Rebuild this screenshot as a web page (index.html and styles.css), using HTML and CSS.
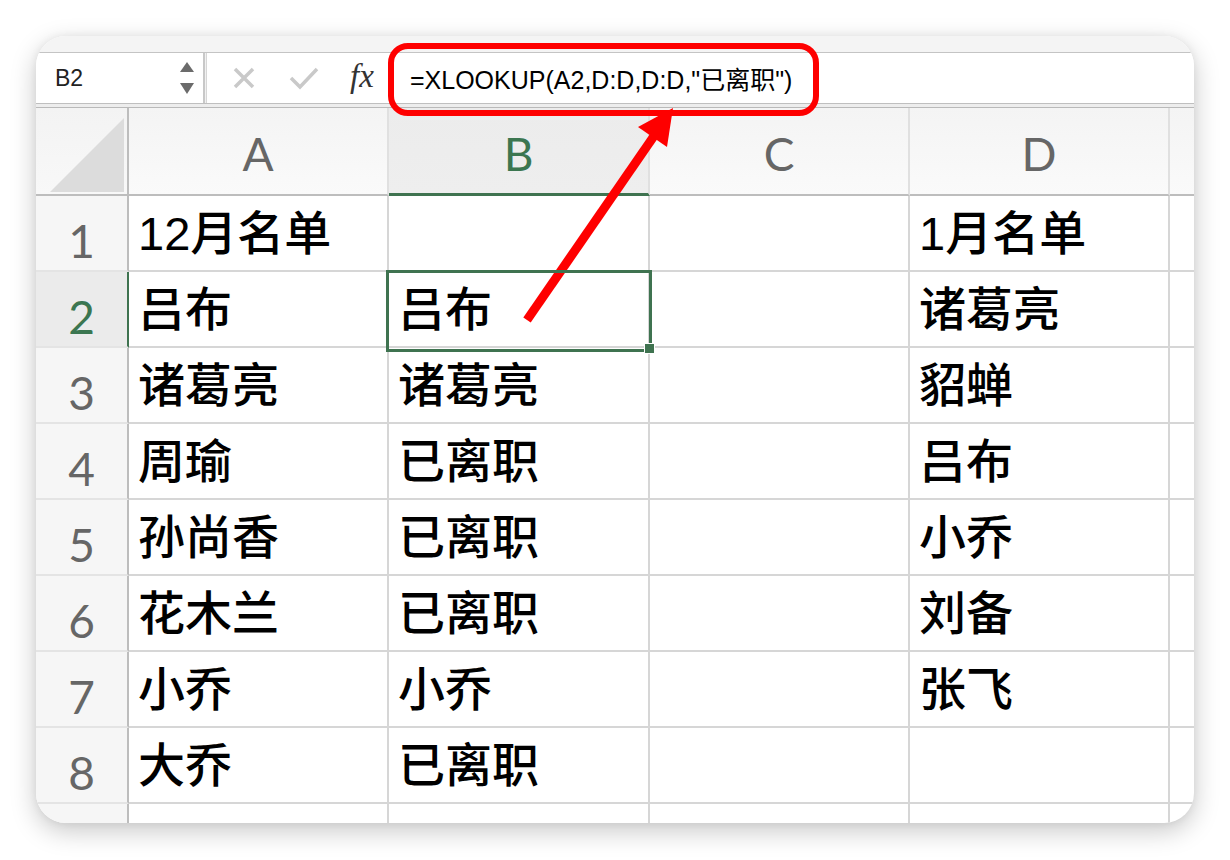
FILE: index.html
```html
<!DOCTYPE html>
<html lang="zh-CN">
<head>
<meta charset="utf-8">
<title>XLOOKUP</title>
<link rel="stylesheet" href="styles.css">
</head>
<body>
<div class="stage">
  <div class="card">
    <div class="topband"></div>
    <div class="fbar">
      <div class="namebox">
        <span class="ref">B2</span>
        <svg class="spin" width="14" height="32" viewBox="0 0 14 32"><polygon points="0,10 7,0 14,10" fill="#6b6b6b"/><polygon points="0,21 14,21 7,32" fill="#6b6b6b"/></svg>
      </div>
      <div class="vsep"></div>
      <div class="tools">
        <svg class="ico-x" width="24" height="24" viewBox="0 0 24 24"><path d="M3 3 L21 21 M21 3 L3 21" stroke="#c9c9c9" stroke-width="3.5" fill="none"/></svg>
        <svg class="ico-ok" width="30" height="24" viewBox="0 0 30 24"><path d="M2 12 L11 21 L28 3" stroke="#c9c9c9" stroke-width="3.5" fill="none"/></svg>
        <span class="fx">fx</span>
      </div>
      <div class="formula">=XLOOKUP(A2,D:D,D:D,"已离职")</div>
    </div>
    <div class="fsep"></div>
    <div class="sheet">
      <div class="corner"><svg width="91" height="86" viewBox="0 0 91 86"><polygon points="14,84 88,84 88,10" fill="#dcdcdc"/></svg></div>
      <div class="h">A</div>
      <div class="h active">B</div>
      <div class="h">C</div>
      <div class="h">D</div>
      <div class="h last"></div>

      <div class="r">1</div><div class="c">12月名单</div><div class="c"></div><div class="c"></div><div class="c">1月名单</div><div class="c last"></div>
      <div class="r active">2</div><div class="c">吕布</div><div class="c sel">吕布<span class="handle"></span></div><div class="c"></div><div class="c">诸葛亮</div><div class="c last"></div>
      <div class="r">3</div><div class="c">诸葛亮</div><div class="c">诸葛亮</div><div class="c"></div><div class="c">貂蝉</div><div class="c last"></div>
      <div class="r">4</div><div class="c">周瑜</div><div class="c">已离职</div><div class="c"></div><div class="c">吕布</div><div class="c last"></div>
      <div class="r">5</div><div class="c">孙尚香</div><div class="c">已离职</div><div class="c"></div><div class="c">小乔</div><div class="c last"></div>
      <div class="r">6</div><div class="c">花木兰</div><div class="c">已离职</div><div class="c"></div><div class="c">刘备</div><div class="c last"></div>
      <div class="r">7</div><div class="c">小乔</div><div class="c">小乔</div><div class="c"></div><div class="c">张飞</div><div class="c last"></div>
      <div class="r">8</div><div class="c">大乔</div><div class="c">已离职</div><div class="c"></div><div class="c"></div><div class="c last"></div>
      <div class="r"></div><div class="c"></div><div class="c"></div><div class="c"></div><div class="c"></div><div class="c last"></div>
    </div>
  </div>
  <div class="callout"></div>
  <svg class="arrow" width="1230" height="860" viewBox="0 0 1230 860">
    <line x1="527" y1="320" x2="654" y2="136" stroke="#fe0000" stroke-width="9"/>
    <polygon points="673,108 638,127 667,147" fill="#fe0000"/>
  </svg>
</div>
</body>
</html>
```

FILE: styles.css
```css
html, body {
  margin: 0;
  padding: 0;
  background: #ffffff;
}

.stage {
  position: relative;
  width: 1230px;
  height: 860px;
  padding: 36px;
  box-sizing: border-box;
  font-family: "Liberation Sans", "Noto Sans CJK SC", sans-serif;
}

.card {
  width: 1158px;
  height: 787px;
  border-radius: 30px;
  overflow: hidden;
  background: #ffffff;
  box-shadow: 0 8px 26px rgba(0, 0, 0, 0.22), 0 0 8px rgba(0, 0, 0, 0.06);
  display: flex;
  flex-direction: column;
}

.topband {
  height: 16px;
  flex: none;
  background: #f4f4f4;
}

.fbar {
  height: 52px;
  flex: none;
  box-sizing: border-box;
  border-top: 1px solid #c4c4c4;
  border-bottom: 1px solid #bfbfbf;
  display: flex;
  align-items: stretch;
  background: #ffffff;
}

.namebox {
  width: 167px;
  flex: none;
  box-sizing: border-box;
  padding: 0 9px 0 19px;
  display: flex;
  align-items: center;
  justify-content: space-between;
}

.ref {
  font-size: 23px;
  color: #222222;
}

.spin {
  display: block;
}

.vsep {
  width: 4px;
  flex: none;
  box-sizing: border-box;
  border-left: 2px solid #c8c8c8;
  border-right: 1px solid #d6d6d6;
  background: #f1f1f1;
}

.tools {
  width: 196px;
  flex: none;
  display: flex;
  align-items: center;
}

.ico-x {
  margin-left: 25px;
  display: block;
}

.ico-ok {
  margin-left: 33px;
  display: block;
}

.fx {
  margin-left: 31px;
  font-family: "Liberation Serif", "DejaVu Serif", serif;
  font-style: italic;
  font-size: 33px;
  color: #333333;
  line-height: 1;
  margin-top: -4px;
}

.formula {
  display: flex;
  align-items: center;
  padding-left: 7px;
  font-size: 25px;
  color: #000000;
  white-space: nowrap;
}

.fsep {
  height: 3px;
  flex: none;
  background: #ededed;
  border-bottom: 1px solid #b9b9b9;
}

.sheet {
  flex: 1;
  display: grid;
  grid-template-columns: 93px 260px 261px 260px 260px 24px;
  grid-template-rows: 88px repeat(9, 76px);
  overflow: hidden;
}

.corner {
  background: linear-gradient(#f3f3f3, #f8f8f8);
  border-right: 2px solid #bdbdbd;
  border-bottom: 2px solid #bdbdbd;
}

.corner svg {
  display: block;
}

.h {
  background: linear-gradient(#f4f4f4, #fafafa);
  border-right: 2px solid #e0e0e0;
  border-bottom: 2px solid #bdbdbd;
  display: flex;
  justify-content: center;
  align-items: flex-end;
  padding-bottom: 17px;
  font-family: Lato, "Liberation Sans", sans-serif;
  font-weight: 400;
  font-size: 46px;
  line-height: 46px;
  color: #666666;
}

.h.active {
  background: linear-gradient(#ececec, #eeeeee);
  border-bottom: 3px solid #3f7350;
  padding-bottom: 16px;
  color: #3b7650;
}

.h.last {
  border-right: none;
}

.r {
  background: #f6f6f6;
  border-right: 2px solid #bdbdbd;
  border-bottom: 2px solid #e4e4e4;
  display: flex;
  justify-content: center;
  align-items: flex-end;
  padding-bottom: 6px;
  font-family: Lato, "Liberation Sans", sans-serif;
  font-weight: 400;
  font-size: 46px;
  line-height: 46px;
  color: #666666;
}

.r.active {
  background: #ebebeb;
  border-right-color: #3f7350;
  color: #3b7650;
}

.c {
  border-right: 2px solid #d6d6d6;
  border-bottom: 2px solid #d6d6d6;
  display: flex;
  align-items: center;
  padding-left: 9px;
  font-family: "Liberation Sans", "Noto Sans CJK SC", sans-serif;
  font-weight: 500;
  font-size: 47px;
  line-height: 1;
  color: #000000;
  white-space: nowrap;
  overflow: hidden;
  min-width: 0;
}

.c.last {
  border-right: none;
}

.c.sel {
  position: relative;
  overflow: visible;
  z-index: 2;
}

.c.sel::after {
  content: "";
  position: absolute;
  left: -3px;
  top: -2px;
  right: -4px;
  bottom: -6px;
  border: 3px solid #3f7350;
}

.handle {
  position: absolute;
  right: -7px;
  bottom: -8px;
  width: 11px;
  height: 11px;
  box-sizing: border-box;
  border: 1px solid #ffffff;
  background: #3f7350;
  z-index: 3;
}

.callout {
  position: absolute;
  left: 388px;
  top: 43px;
  width: 431px;
  height: 73px;
  box-sizing: border-box;
  border: 6px solid #fe0000;
  border-radius: 20px;
}

.arrow {
  position: absolute;
  left: 0;
  top: 0;
  pointer-events: none;
}
```
